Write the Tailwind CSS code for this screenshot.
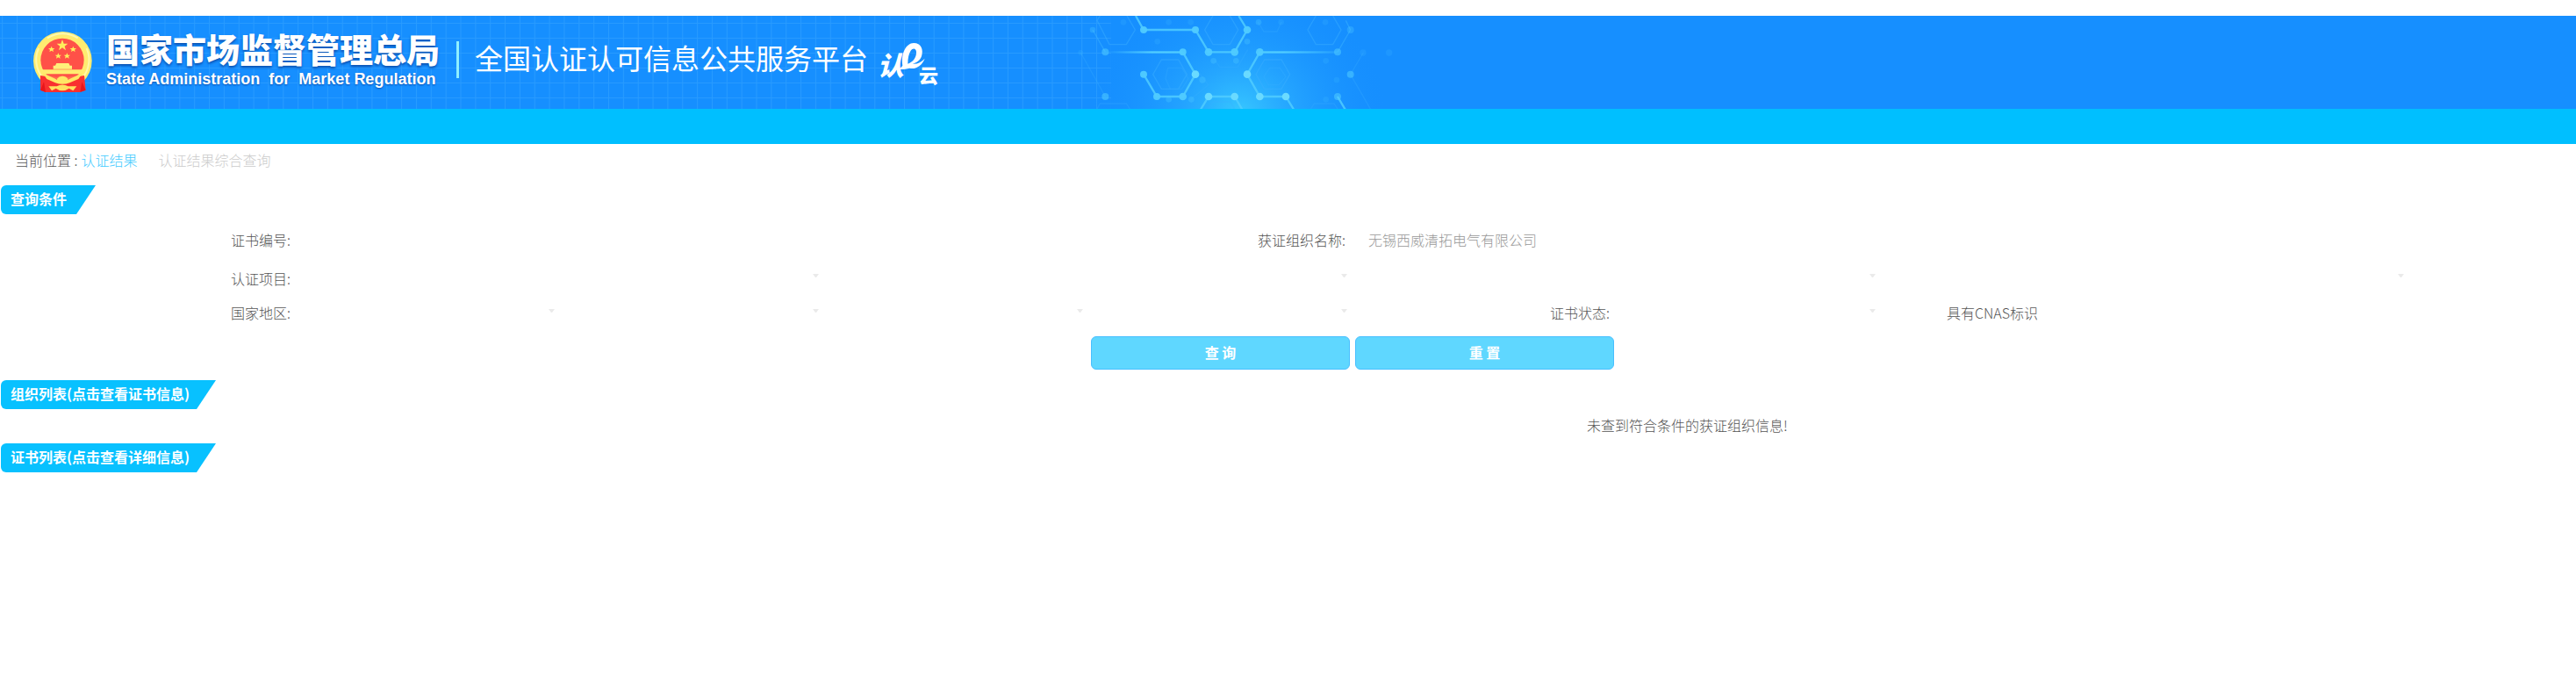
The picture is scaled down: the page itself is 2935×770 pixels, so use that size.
<!DOCTYPE html>
<html lang="zh-CN">
<head>
  <meta charset="UTF-8" />
  <meta name="viewport" content="width=device-width, initial-scale=1.0" />
  <title>全国认证认可信息公共服务平台</title>
  <!-- Tailwind -->
  <script src="https://cdn.jsdelivr.net/npm/@tailwindcss/browser@4"></script>
</head>
<body class="min-h-screen bg-white pt-[18px] font-['Noto_Sans_CJK_SC',sans-serif] text-base font-light text-[#555]">
  <!-- Banner -->
  <header class="relative h-[106px] overflow-hidden bg-[#168fff] text-white">
    <svg class="absolute top-0 left-0" width="1620" height="106" viewBox="0 0 1620 106" fill="none" aria-hidden="true">
      <defs>
        <pattern id="grid" x="19" y="8" width="16.85" height="17" patternUnits="userSpaceOnUse">
          <path d="M.5 0V17M0 .5H17" stroke="#36a6ff" stroke-width="1" opacity=".55" />
        </pattern>
        <radialGradient id="glow" gradientUnits="userSpaceOnUse" cx="1412" cy="112" r="170" gradientTransform="translate(0 11) scale(1 .9)">
          <stop offset="0" stop-color="#38c8ff" />
          <stop offset=".4" stop-color="#28aaff" stop-opacity=".7" />
          <stop offset="1" stop-color="#168fff" stop-opacity="0" />
        </radialGradient>
        <linearGradient id="fadeL" x1="0" x2="1"><stop offset="0" stop-color="#50ccff" stop-opacity="0" /><stop offset=".6" stop-color="#50ccff" /></linearGradient>
        <linearGradient id="fadeR" x1="0" x2="1"><stop offset=".3" stop-color="#50ccff" /><stop offset="1" stop-color="#50ccff" stop-opacity=".2" /></linearGradient>
      </defs>
      <rect width="1266" height="106" fill="url(#grid)" />
      <rect x="1230" width="380" height="106" fill="url(#glow)" />
      <!-- the molecule drawing, three units to a pixel -->
      <g transform="translate(1200 -18) scale(.33333)">
        <g stroke="#3cb0ff" stroke-width="4" opacity=".45">
          <path d="M546 54L518 102L546 152H604L632 102L604 54M370 204H428L457 254L428 304H370L341 254ZM722 204H780L809 254L780 304H722L693 254ZM160 54L150 70L192 152H250L280 102L252 54M898 54L870 102L898 152H956L984 102L956 54" />
          <path opacity=".6" d="M392 232H440L462 268L440 304H400L384 268ZM740 232H775L795 262L772 290H735L720 262ZM555 208L570 230H630L665 170M94 180L178 330M1060 180L1016 254L1084 372M150 372L160 354H250L262 372M530 372L545 348H605L620 372M880 372L892 354H960L972 372M470 340L530 290L500 250M700 75L720 108H765L780 75" />
        </g>
        <path d="M135 102L178 178M1016 102L972 178M1000 70L1016 102" stroke="#3cb4ff" stroke-width="4" opacity=".5" />
        <rect x="178" y="175" width="265" height="7" fill="url(#fadeL)" />
        <rect x="706" y="175" width="265" height="7" fill="url(#fadeR)" />
        <g stroke="#50ccff" stroke-width="7">
          <path d="M282 54L309 102H486L531 178H620L663 102L634 54M443 178L486 254L443 330H354L309 254M706 178L663 254L706 330H795L822 374M504 374L531 330H620L646 374M972 330L998 374" opacity=".85" />
        </g>
        <g fill="#50ccff">
          <g opacity=".95"><circle cx="309" cy="102" r="12" /><circle cx="486" cy="102" r="12" /><circle cx="663" cy="102" r="13" /><circle cx="443" cy="178" r="12" /><circle cx="531" cy="178" r="13" /><circle cx="620" cy="178" r="13" /><circle cx="706" cy="178" r="13" /><circle cx="309" cy="254" r="12" /><circle cx="354" cy="330" r="12" /><circle cx="443" cy="330" r="13" /></g>
          <g fill="#6adaff"><circle cx="486" cy="254" r="13" /><circle cx="663" cy="254" r="13" /><circle cx="531" cy="330" r="13" /><circle cx="620" cy="330" r="13" /><circle cx="706" cy="330" r="13" /><circle cx="795" cy="330" r="13" /></g>
          <g opacity=".55"><circle cx="178" cy="178" r="12" /><circle cx="178" cy="330" r="12" /><circle cx="972" cy="178" r="12" /><circle cx="1016" cy="254" r="12" /><circle cx="972" cy="330" r="12" /></g>
          <g opacity=".3"><circle cx="1016" cy="102" r="12" /><circle cx="135" cy="102" r="10" /><circle cx="548" cy="208" r="10" /><circle cx="625" cy="208" r="10" /><circle cx="510" cy="273" r="11" /><circle cx="472" cy="340" r="10" /><circle cx="395" cy="340" r="10" /><circle cx="663" cy="142" r="10" /><circle cx="702" cy="76" r="10" /></g>
          <g opacity=".14"><circle cx="94" cy="180" r="9" /><circle cx="779" cy="76" r="10" /><circle cx="1059" cy="180" r="11" /><circle cx="1148" cy="180" r="11" /><circle cx="240" cy="76" r="10" /><circle cx="395" cy="76" r="10" /><circle cx="470" cy="76" r="10" /><circle cx="356" cy="142" r="10" /><circle cx="930" cy="76" r="10" /><circle cx="932" cy="208" r="10" /><circle cx="969" cy="273" r="10" /><circle cx="932" cy="340" r="10" /></g>
        </g>
      </g>
    </svg>

    <div class="relative flex items-start pl-[30px] whitespace-nowrap">
      <!-- National emblem -->
      <svg class="mt-3 shrink-0" width="84" height="84" viewBox="0 0 252 252" role="img" aria-label="国徽">
        <circle cx="124" cy="118" r="100" fill="#ffec70" />
        <path d="M42 75C22 120 40 165 70 190M206 75C226 120 208 165 178 190" fill="none" stroke="#fff8a8" stroke-width="6" />
        <path d="M72 40Q124 10 176 40" fill="none" stroke="#fff8b0" stroke-width="6" />
        <circle cx="123" cy="115" r="74" fill="#ff5148" />
        <path fill="#ffee5c" d="M123 45l5 14h14l-11 9 4 14-12-9-12 9 4-14-11-9h14zM86 68l3 7h8l-6 5 2 7-7-4-7 4 2-7-6-5h8zM160 68l3 7h8l-6 5 2 7-7-4-7 4 2-7-6-5h8zM109 91l3 7h8l-6 5 2 7-7-4-7 4 2-7-6-5h8zM139 91l3 7h8l-6 5 2 7-7-4-7 4 2-7-6-5h8z" />
        <path d="M103 126H145L149 134H156V146H92V134H99Z" fill="#fff07a" />
        <path d="M54 148H192V163H54Z" fill="#ffec70" />
        <path d="M62 166L104 174Q123 162 142 174L184 166L168 190H80Z" fill="#ff6a50" />
        <path d="M48 168L72 172L92 188Q106 178 123 178Q140 178 156 188L176 172L198 168L203 218L182 225H66L48 218Z" fill="#f93030" />
        <path d="M56 160L96 178Q108 186 105 179Q112 170 123 170Q135 170 142 179Q140 186 152 178L192 160L178 180L148 193Q124 202 99 193L70 180Z" fill="#ffe765" />
        <path d="M76 205L104 205Q123 194 143 205L172 205L160 220L146 212Q123 228 101 212L87 220Z" fill="#ffe060" />
        <path d="M48 218L60 190L66 225M203 218L190 190L184 225" fill="#e8161c" />
      </svg>
      <div class="pl-[7px] font-['Liberation_Sans','Noto_Sans_CJK_SC',sans-serif]">
        <h1 class="pt-[19px] text-[38px] leading-[43px] font-black text-shadow-[0_2px_3px_#0a4fb0]">国家市场监督管理总局</h1>
        <p class="text-lg leading-5 font-bold text-shadow-[0_1px_2px_#0a4fb0]">State Administration&nbsp; for&nbsp; Market Regulation</p>
      </div>
      <div class="mt-[29px] ml-[19px] h-[42px] w-[3px] bg-[#8fefff]"></div>
      <h2 class="mt-6 ml-[18px] text-[32px] leading-[46px] font-normal">全国认证认可信息公共服务平台</h2>
      <svg class="mt-[22px] shrink-0" width="90" height="64" viewBox="0 0 270 192" role="img" aria-label="认e云" fill="#fff">
        <text x="32" y="138" font-size="90" font-weight="900" font-style="italic" font-family="'Noto Sans CJK SC',sans-serif">认</text>
        <path fill-rule="evenodd" d="M118 104C112 62 130 28 156 27C182 27 190 50 183 72C178 86 166 95 152 98C168 100 182 92 194 80C184 104 164 118 142 113C130 116 112 118 100 116C108 114 114 110 118 104ZM136 98C154 92 166 76 165 57C164 44 153 43 146 53C139 63 136 80 136 98Z" />
        <text x="174" y="163" font-size="66" font-weight="900" font-family="'Noto Sans CJK SC',sans-serif">云</text>
      </svg>
    </div>
  </header>
  <div class="h-10 bg-[#00bfff]"></div>

  <!-- Breadcrumb -->
  <nav class="flex h-[47px] items-start pt-1.5 pl-[17px] leading-6" aria-label="当前位置">
    <span class="pr-1">当前位置 :</span>
    <a href="#" class="pr-6 text-[#45ccff]">认证结果</a>
    <span class="text-[#ccc]">认证结果综合查询</span>
  </nav>

  <main>
    <h3 class="ml-px flex h-[33px] w-[108px] items-center rounded-l-md bg-[#08c1ff] pb-[3px] pl-[11px] font-bold text-white [clip-path:polygon(0_0,100%_0,calc(100%-22px)_100%,0_100%)]">查询条件</h3>

    <!-- Search form -->
    <form class="pt-2">
      <div class="grid h-[47px] grid-cols-[339fr_repeat(8,301fr)_188fr]">
        <label for="certNo" class="pr-2 text-right leading-[42px]">证书编号:</label>
        <input id="certNo" type="text" class="col-span-2 h-[42px] min-w-0 px-4 outline-none" />
        <label for="orgName" class="col-start-5 pr-2.5 text-right leading-[42px]">获证组织名称:</label>
        <input id="orgName" type="text" value="无锡西威清拓电气有限公司" class="col-span-2 h-[42px] min-w-0 px-4 font-light text-[#999] outline-none" />
      </div>
      <div class="grid h-10 grid-cols-[339fr_repeat(8,301fr)_188fr]">
        <label for="item1" class="pr-2 text-right leading-9">认证项目:</label>
        <div class="relative col-span-2">
          <select id="item1" class="h-full w-full appearance-none outline-none"><option></option></select>
          <svg class="pointer-events-none absolute top-[13px] right-2" width="7" height="4" fill="#eaeaea"><path d="M0 0H7L4 4H3Z" /></svg>
        </div>
        <div class="relative col-span-2">
          <select aria-label="认证项目二级" class="h-full w-full appearance-none outline-none"><option></option></select>
          <svg class="pointer-events-none absolute top-[13px] right-2" width="7" height="4" fill="#eaeaea"><path d="M0 0H7L4 4H3Z" /></svg>
        </div>
        <div class="relative col-span-2">
          <select aria-label="认证项目三级" class="h-full w-full appearance-none outline-none"><option></option></select>
          <svg class="pointer-events-none absolute top-[13px] right-2" width="7" height="4" fill="#eaeaea"><path d="M0 0H7L4 4H3Z" /></svg>
        </div>
        <div class="relative col-span-2">
          <select aria-label="认证项目四级" class="h-full w-full appearance-none outline-none"><option></option></select>
          <svg class="pointer-events-none absolute top-[13px] right-2" width="7" height="4" fill="#eaeaea"><path d="M0 0H7L4 4H3Z" /></svg>
        </div>
      </div>
      <div class="grid h-11 grid-cols-[339fr_repeat(8,301fr)_188fr]">
        <label for="area1" class="pr-2 text-right leading-[34px]">国家地区:</label>
        <div class="relative">
          <select id="area1" class="h-9 w-full appearance-none outline-none"><option></option></select>
          <svg class="pointer-events-none absolute top-[13px] right-2" width="7" height="4" fill="#eaeaea"><path d="M0 0H7L4 4H3Z" /></svg>
        </div>
        <div class="relative">
          <select aria-label="省份" class="h-9 w-full appearance-none outline-none"><option></option></select>
          <svg class="pointer-events-none absolute top-[13px] right-2" width="7" height="4" fill="#eaeaea"><path d="M0 0H7L4 4H3Z" /></svg>
        </div>
        <div class="relative">
          <select aria-label="城市" class="h-9 w-full appearance-none outline-none"><option></option></select>
          <svg class="pointer-events-none absolute top-[13px] right-2" width="7" height="4" fill="#eaeaea"><path d="M0 0H7L4 4H3Z" /></svg>
        </div>
        <div class="relative">
          <select aria-label="区县" class="h-9 w-full appearance-none outline-none"><option></option></select>
          <svg class="pointer-events-none absolute top-[13px] right-2" width="7" height="4" fill="#eaeaea"><path d="M0 0H7L4 4H3Z" /></svg>
        </div>
        <label for="status" class="pr-2.5 text-right leading-[34px]">证书状态:</label>
        <div class="relative">
          <select id="status" class="h-9 w-full appearance-none outline-none"><option></option></select>
          <svg class="pointer-events-none absolute top-[13px] right-2" width="7" height="4" fill="#eaeaea"><path d="M0 0H7L4 4H3Z" /></svg>
        </div>
        <div class="flex h-[34px] items-center justify-end gap-2 pr-[124px]">
          <input id="cnas" type="checkbox" class="size-4 appearance-none" />
          <label for="cnas">具有CNAS标识</label>
        </div>
      </div>
      <div class="grid grid-cols-[339fr_repeat(8,301fr)_188fr]">
        <button type="submit" class="col-start-5 mr-[5px] ml-px h-[38px] rounded-md border border-[#48bfff] bg-[#5fd7ff] pb-[3px] font-bold text-white">查 询</button>
        <button type="reset" class="mr-[5px] ml-px h-[38px] rounded-md border border-[#48bfff] bg-[#5fd7ff] pb-[3px] font-bold text-white">重 置</button>
      </div>
    </form>

    <!-- Results -->
    <h3 class="mt-3 ml-px flex h-[33px] w-[245px] items-center rounded-l-md bg-[#08c1ff] pb-[3px] pl-[11px] font-bold text-white [clip-path:polygon(0_0,100%_0,calc(100%-22px)_100%,0_100%)]">组织列表(点击查看证书信息)</h3>
    <p class="ml-[31%] h-[39px] text-center leading-9">未查到符合条件的获证组织信息!</p>
    <h3 class="ml-px flex h-[33px] w-[245px] items-center rounded-l-md bg-[#08c1ff] pb-[3px] pl-[11px] font-bold text-white [clip-path:polygon(0_0,100%_0,calc(100%-22px)_100%,0_100%)]">证书列表(点击查看详细信息)</h3>
  </main>
</body>
</html>
